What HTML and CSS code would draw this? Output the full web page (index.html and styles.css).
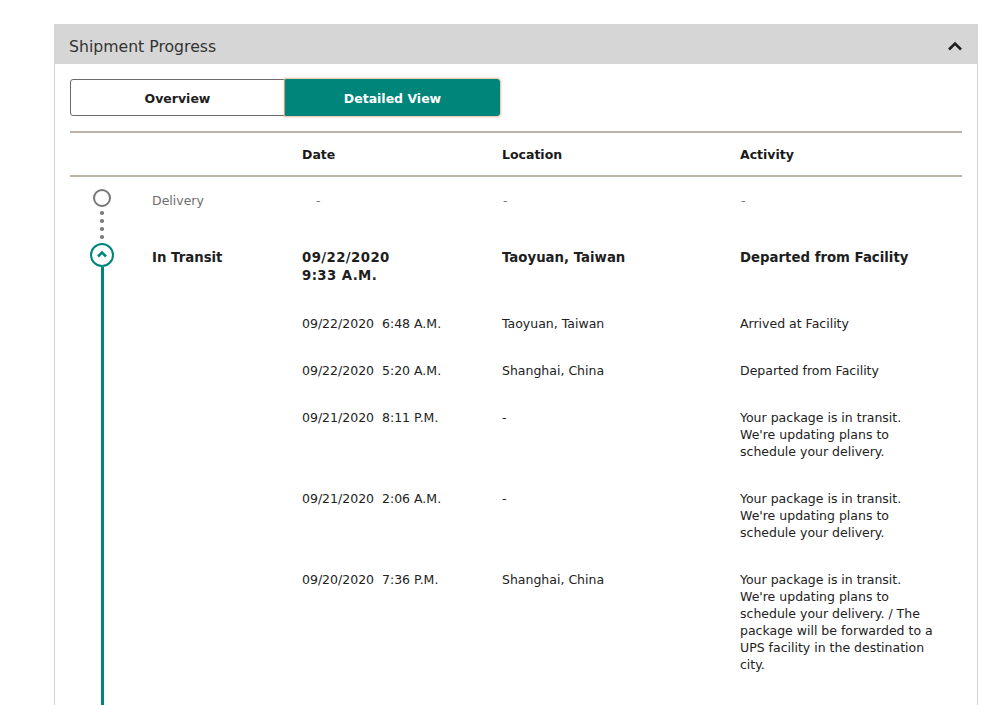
FILE: index.html
```html
<!DOCTYPE html>
<html>
<head>
<meta charset="utf-8">
<link rel="stylesheet" href="styles.css">
</head>
<body>
<div class="page">
  <section class="panel">
    <header class="panel-head">
      <h2 class="panel-title">Shipment Progress</h2>
      <svg class="collapse" width="16" height="10" viewBox="0 0 16 10"><path d="M2 8.5 L8 2.5 L14 8.5" fill="none" stroke="#1f1f1f" stroke-width="2.6"/></svg>
    </header>
    <div class="panel-body">
      <div class="toggle">
        <button class="tab">Overview</button>
        <button class="tab active">Detailed View</button>
      </div>
      <div class="table-head">
        <div class="th-spacer"></div>
        <div class="th-status"></div>
        <div class="th">Date</div>
        <div class="th">Location</div>
        <div class="th">Activity</div>
      </div>
      <div class="table">
        <div class="timeline">
          <span class="node node-future"></span>
          <span class="dots"><i></i><i></i><i></i><i></i></span>
          <span class="node node-current">
            <svg width="12" height="8" viewBox="0 0 12 8"><path d="M2 6.5 L6 2.5 L10 6.5" fill="none" stroke="#00857b" stroke-width="2.6"/></svg>
          </span>
          <span class="track"></span>
        </div>
        <div class="rows">
          <div class="row row-future">
            <div class="status">Delivery</div>
            <div class="cell dash-date">-</div>
            <div class="cell dash">-</div>
            <div class="cell dash">-</div>
          </div>
          <div class="row row-main">
            <div class="status strong">In Transit</div>
            <div class="cell strong date-strong">09/22/2020<br>9:33 A.M.</div>
            <div class="cell strong">Taoyuan, Taiwan</div>
            <div class="cell strong act">Departed from Facility</div>
          </div>
          <div class="row">
            <div class="status"></div>
            <div class="cell">09/22/2020&nbsp;&nbsp;6:48 A.M.</div>
            <div class="cell">Taoyuan, Taiwan</div>
            <div class="cell act">Arrived at Facility</div>
          </div>
          <div class="row">
            <div class="status"></div>
            <div class="cell">09/22/2020&nbsp;&nbsp;5:20 A.M.</div>
            <div class="cell">Shanghai, China</div>
            <div class="cell act">Departed from Facility</div>
          </div>
          <div class="row">
            <div class="status"></div>
            <div class="cell">09/21/2020&nbsp;&nbsp;8:11 P.M.</div>
            <div class="cell">-</div>
            <div class="cell act">Your package is in transit. We're updating plans to schedule your delivery.</div>
          </div>
          <div class="row">
            <div class="status"></div>
            <div class="cell">09/21/2020&nbsp;&nbsp;2:06 A.M.</div>
            <div class="cell">-</div>
            <div class="cell act">Your package is in transit. We're updating plans to schedule your delivery.</div>
          </div>
          <div class="row">
            <div class="status"></div>
            <div class="cell">09/20/2020&nbsp;&nbsp;7:36 P.M.</div>
            <div class="cell">Shanghai, China</div>
            <div class="cell act">Your package is in transit. We're updating plans to schedule your delivery. / The package will be forwarded to a UPS facility in the destination city.</div>
          </div>
        </div>
      </div>
    </div>
  </section>
</div>
</body>
</html>
```

FILE: styles.css
```css
* { box-sizing: border-box; }
html, body { margin: 0; padding: 0; background: #fff; }
body {
  font-family: "DejaVu Sans", Verdana, sans-serif;
  font-size: 12.5px;
  line-height: 17px;
  color: #222;
}
.page { padding: 24px 0 0 54px; }
.panel {
  width: 924px;
  border-left: 1px solid #d4d4d4;
  border-right: 1px solid #d4d4d4;
}
.panel-head {
  height: 40px;
  background: #d6d6d6;
  display: flex;
  align-items: center;
  justify-content: space-between;
  padding: 4px 14px 0 14px;
}
.panel-title {
  margin: 0;
  font-weight: normal;
  font-size: 15.7px;
  color: #333;
}
.collapse { display: block; }
.panel-body { padding: 15px 15px 0 15px; }
.toggle { display: flex; width: 430px; height: 37px; }
.tab {
  flex: 1;
  font-family: inherit;
  font-weight: bold;
  font-size: 12.5px;
  color: #1e1e1e;
  background: #fff;
  border: 1px solid #6a6a6a;
  border-radius: 3px 0 0 3px;
  padding: 2px 0 0;
  margin: 0;
}
.tab.active {
  background: #00857b;
  color: #fff;
  border: 1px solid #00857b;
  border-radius: 0 3px 3px 0;
  box-shadow: 0 0 2px 1px #e8b896;
}
.table-head {
  margin-top: 15px;
  border-top: 2px solid #bdb3a6;
  border-bottom: 2px solid #bdb3a6;
  display: grid;
  grid-template-columns: 82px 150px 200px 238px 1fr;
  padding: 13px 0 12px;
}
.th { font-weight: bold; color: #1a1a1a; }
.table { display: flex; }
.timeline {
  width: 82px;
  flex: none;
  display: flex;
  flex-direction: column;
  align-items: center;
  padding-top: 12px;
  padding-right: 18px;
}
.node {
  display: flex;
  align-items: center;
  justify-content: center;
  border-radius: 50%;
  flex: none;
}
.node-future {
  width: 18px;
  height: 18px;
  border: 2px solid #777;
}
.dots {
  height: 36px;
  display: flex;
  flex-direction: column;
  align-items: center;
  justify-content: center;
  gap: 4.6px;
}
.dots i {
  display: block;
  width: 3.6px;
  height: 3.6px;
  border-radius: 50%;
  background: #7d7d7d;
}
.node-current {
  width: 24px;
  height: 24px;
  border: 2.4px solid #00857b;
}
.node-current svg { display: block; margin-top: -2px; }
.track {
  width: 3px;
  flex: 1;
  background: #00857b;
}
.rows { flex: 1; padding-bottom: 60px; }
.row {
  display: grid;
  grid-template-columns: 150px 200px 238px 1fr;
  padding: 15px 0;
}
.row-main { padding: 25px 0 15px; }
.status { color: #1e1e1e; }
.row-future .status { color: #6e6e6e; }
.strong { font-weight: bold; font-size: 13.3px; line-height: 18px; color: #1e1e1e; }
.date-strong { letter-spacing: 0.4px; }
.dash-date { color: #777; padding-left: 14px; }
.dash { color: #777; padding-left: 1px; }
.act { max-width: 198px; }
```
